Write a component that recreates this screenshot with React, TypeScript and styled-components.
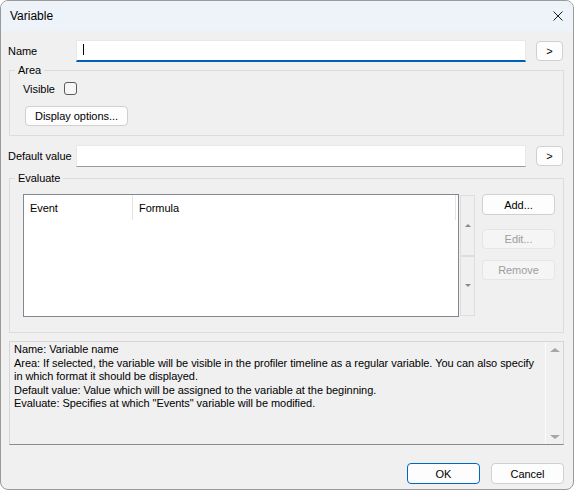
import React from "react";
import styled, { createGlobalStyle } from "styled-components";

const GlobalStyle = createGlobalStyle`
  * {
    box-sizing: border-box;
  }

  html,
  body {
    margin: 0;
    padding: 0;
    background: #ffffff;
  }

  body {
    font-family: "Liberation Sans", Arial, sans-serif;
    font-size: 11px;
    letter-spacing: -0.05px;
    color: #000000;
  }
`;

const Window = styled.div`
  width: 574px;
  height: 490px;
  display: flex;
  flex-direction: column;
  border: 1px solid #9a9a9a;
  border-radius: 8px;
  overflow: hidden;
  background: #f0f0f0;
`;

const TitleBar = styled.div`
  flex: 0 0 30px;
  display: flex;
  align-items: center;
  justify-content: space-between;
  padding: 0 10px 0 9px;
  background: #eef3fa;
  font-size: 12px;
  letter-spacing: 0;
`;

const Body = styled.div`
  flex: 1;
  display: flex;
  flex-direction: column;
  padding: 9px 9px 0 7px;
`;

const FieldRow = styled.div<{ $mt?: number }>`
  display: flex;
  align-items: center;
  height: 22px;
  padding-right: 1px;
  margin-top: ${(p) => p.$mt ?? 0}px;
`;

const FieldLabel = styled.label`
  flex: 0 0 68px;
  white-space: nowrap;
`;

const TextBox = styled.div<{ $focused?: boolean }>`
  flex: 1;
  height: 22px;
  display: flex;
  align-items: center;
  padding-left: 6px;
  background: #ffffff;
  border: 1px solid #e8e8e8;
  border-bottom: ${(p) => (p.$focused ? "2px solid #005fb8" : "1px solid #9a9a9a")};
`;

const Caret = styled.span`
  width: 1px;
  height: 11px;
  margin-bottom: 2px;
  background: #000000;
`;

const Button = styled.button<{ $w?: number; $h?: number; $mt?: number; $ml?: number; $primary?: boolean }>`
  flex: 0 0 auto;
  width: ${(p) => p.$w ?? 73}px;
  height: ${(p) => p.$h ?? 20}px;
  margin: ${(p) => p.$mt ?? 0}px 0 0 ${(p) => p.$ml ?? 0}px;
  padding: 0;
  font: inherit;
  letter-spacing: inherit;
  color: #000000;
  background: #fdfdfd;
  border: 1px solid ${(p) => (p.$primary ? "#0067c0" : "#d0d0d0")};
  border-radius: 4px;

  &:disabled {
    color: #9d9d9d;
    background: #f5f5f5;
    border-color: #e5e5e5;
  }
`;

const GroupBox = styled.fieldset<{ $mt: number; $pad: string }>`
  min-width: 0;
  margin: ${(p) => p.$mt}px 0 0 1px;
  padding: ${(p) => p.$pad};
  border: 1px solid #dcdcdc;
`;

const Legend = styled.legend`
  margin-left: -8px;
  padding: 0 3px;
  line-height: 13px;
`;

const CheckRow = styled.div`
  display: flex;
  align-items: center;
  height: 13px;
`;

const CheckLabel = styled.span`
  flex: 0 0 41px;
`;

const CheckBox = styled.span`
  width: 13px;
  height: 13px;
  border: 1px solid #5c5c5c;
  border-radius: 3px;
  background: #f6f6f6;
`;

const EvalContent = styled.div`
  display: flex;
  height: 123px;
`;

const ListView = styled.div`
  flex: 1;
  background: #ffffff;
  border: 1px solid #828790;
`;

const ListHeader = styled.div`
  display: flex;
  height: 25px;
`;

const HeaderCell = styled.div<{ $w: number }>`
  flex: 0 0 ${(p) => p.$w}px;
  display: flex;
  align-items: center;
  padding-left: 6px;
  border-right: 1px solid #e5e5e5;
`;

const Spin = styled.div`
  flex: 0 0 15px;
  height: 121px;
  margin: 1px 0 0 1px;
  display: flex;
  flex-direction: column;
`;

const SpinHalf = styled.div`
  flex: 1;
  display: flex;
  align-items: center;
  justify-content: center;
  border: 1px solid #dedede;
`;

const Arrow = styled.span<{ $dir: "up" | "down"; $size: number; $color: string }>`
  width: 0;
  height: 0;
  border-left: ${(p) => p.$size}px solid transparent;
  border-right: ${(p) => p.$size}px solid transparent;
  ${(p) =>
    p.$dir === "up"
      ? `border-bottom: ${Math.round(p.$size * 0.6) + 1}px solid ${p.$color};`
      : `border-top: ${Math.round(p.$size * 0.6) + 1}px solid ${p.$color};`}
`;

const ButtonColumn = styled.div`
  flex: 0 0 73px;
  margin-left: 7px;
  display: flex;
  flex-direction: column;
`;

const InfoBox = styled.div`
  height: 104px;
  margin: 8px 0 0 1px;
  display: flex;
  border: 1px solid #d6d6d6;
  border-bottom-color: #8a8a8a;
`;

const InfoText = styled.div`
  flex: 1;
  padding: 1px 0 0 4px;
  line-height: 13.5px;
`;

const InfoLine = styled.div`
  white-space: nowrap;
`;

const ScrollTrack = styled.div`
  flex: 0 0 18px;
  display: flex;
  flex-direction: column;
  align-items: center;
  justify-content: space-between;
  padding: 6px 0 5px;
  border-left: 1px solid #fafafa;
`;

const Footer = styled.div`
  display: flex;
  justify-content: flex-end;
  gap: 11px;
  margin-top: 18px;
`;

const CloseIcon = () => (
  <svg width="10" height="10" viewBox="0 0 10 10">
    <path d="M0.5 0.5 L9.5 9.5 M9.5 0.5 L0.5 9.5" stroke="#1b1b1b" strokeWidth="1" fill="none" />
  </svg>
);

const helpLines = [
  "Name: Variable name",
  "Area: If selected, the variable will be visible in the profiler timeline as a regular variable. You can also specify",
  "in which format it should be displayed.",
  "Default value: Value which will be assigned to the variable at the beginning.",
  'Evaluate: Specifies at which "Events" variable will be modified.',
];

const App = () => {
  return (
    <>
      <GlobalStyle />
      <Window>
        <TitleBar>
          <span>Variable</span>
          <CloseIcon />
        </TitleBar>
        <Body>
          <FieldRow>
            <FieldLabel>Name</FieldLabel>
            <TextBox $focused>
              <Caret />
            </TextBox>
            <Button $w={27} $ml={10}>&gt;</Button>
          </FieldRow>

          <GroupBox $mt={2} $pad="5px 8px 9px 13px">
            <Legend>Area</Legend>
            <CheckRow>
              <CheckLabel>Visible</CheckLabel>
              <CheckBox />
            </CheckRow>
            <Button $w={103} $mt={11} $ml={2}>
              Display options...
            </Button>
          </GroupBox>

          <FieldRow $mt={9}>
            <FieldLabel>Default value</FieldLabel>
            <TextBox />
            <Button $w={27} $ml={10}>&gt;</Button>
          </FieldRow>

          <GroupBox $mt={5} $pad="9px 8px 15px 13px">
            <Legend>Evaluate</Legend>
            <EvalContent>
              <ListView>
                <ListHeader>
                  <HeaderCell $w={109}>Event</HeaderCell>
                  <HeaderCell $w={323}>Formula</HeaderCell>
                </ListHeader>
              </ListView>
              <Spin>
                <SpinHalf>
                  <Arrow $dir="up" $size={3} $color="#8a8a8a" />
                </SpinHalf>
                <SpinHalf>
                  <Arrow $dir="down" $size={3} $color="#8a8a8a" />
                </SpinHalf>
              </Spin>
              <ButtonColumn>
                <Button $h={21}>Add...</Button>
                <Button $mt={14} disabled>
                  Edit...
                </Button>
                <Button $mt={11} disabled>
                  Remove
                </Button>
              </ButtonColumn>
            </EvalContent>
          </GroupBox>

          <InfoBox>
            <InfoText>
              {helpLines.map((line) => (
                <InfoLine key={line}>{line}</InfoLine>
              ))}
            </InfoText>
            <ScrollTrack>
              <Arrow $dir="up" $size={5} $color="#a5a5a5" />
              <Arrow $dir="down" $size={5} $color="#a5a5a5" />
            </ScrollTrack>
          </InfoBox>

          <Footer>
            <Button $h={21} $primary>
              OK
            </Button>
            <Button $h={21}>Cancel</Button>
          </Footer>
        </Body>
      </Window>
    </>
  );
};

export default App;
